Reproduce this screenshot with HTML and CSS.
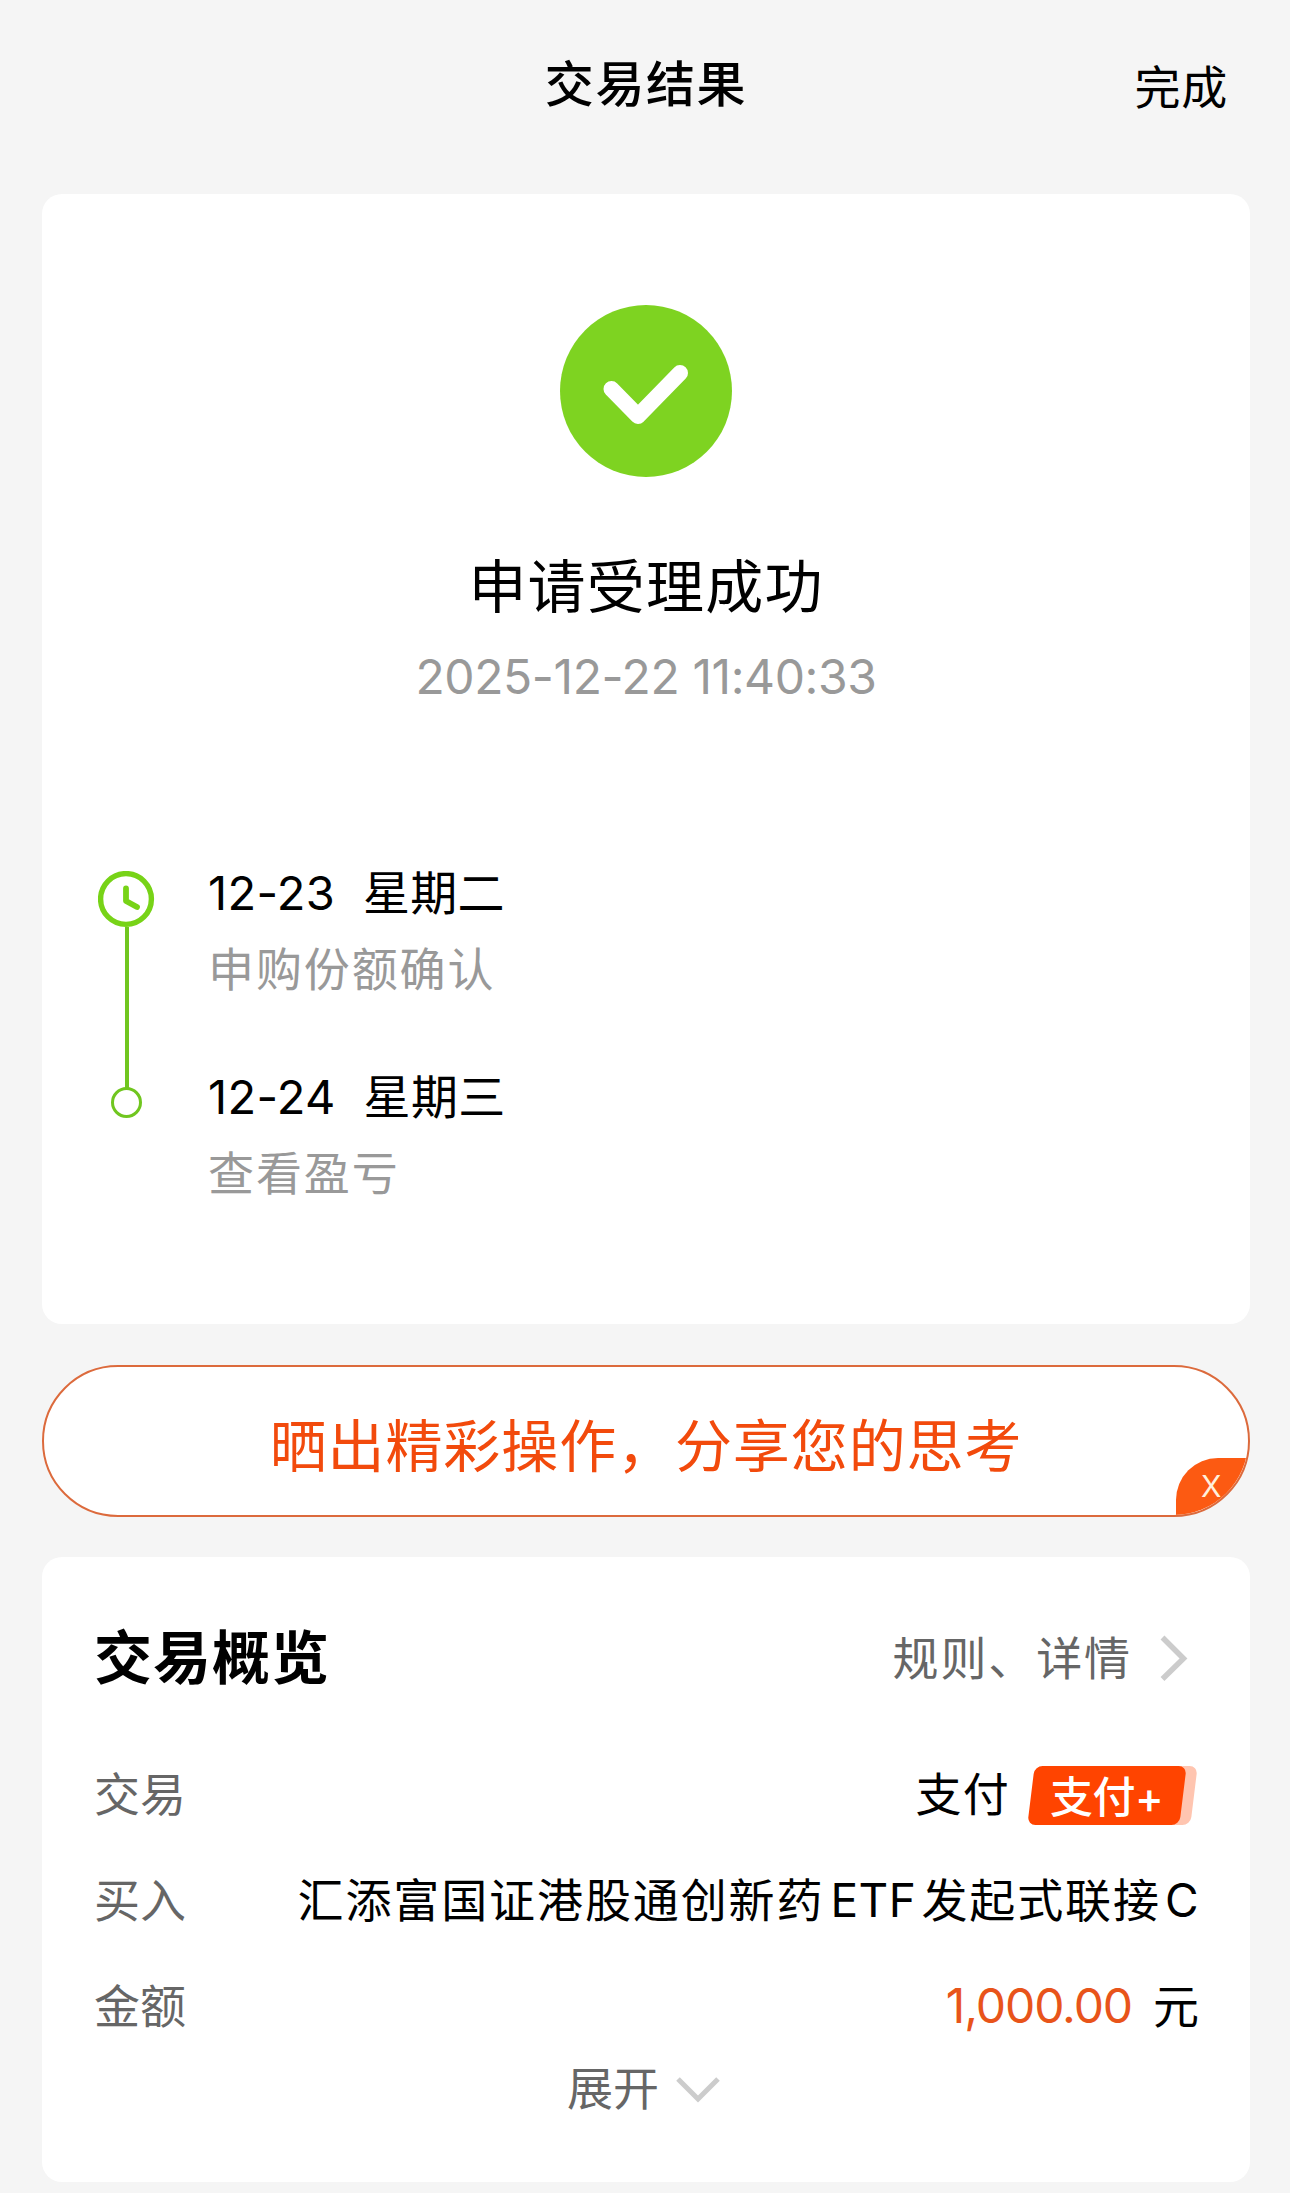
FILE: index.html
```html
<!DOCTYPE html>
<html lang="zh-CN">
<head>
    <meta charset="utf-8">
    <title>交易结果</title>
    <link rel="stylesheet" href="styles.css">
</head>
<body>
    <header class="topbar">
        <h1 class="topbar-title">交易结果</h1>
        <a class="topbar-done">完成</a>
    </header>

    <section class="card result">
        <svg class="result-icon" width="172" height="172" viewBox="0 0 172 172">
            <circle cx="86" cy="86" r="86" fill="#7ed321"/>
            <path d="M51.5 84 L78 111 L120 68" fill="none" stroke="#fff" stroke-width="16" stroke-linecap="round" stroke-linejoin="round"/>
        </svg>
        <h2 class="result-title">申请受理成功</h2>
        <p class="result-time">2025-12-22 11:40:33</p>

        <div class="timeline">
            <svg class="timeline-line" width="57" height="248" viewBox="0 0 57 248">
                <circle cx="28" cy="28" r="25.4" fill="none" stroke="#77d317" stroke-width="5.4"/>
                <path d="M28 17.500 V30 L39 36" fill="none" stroke="#77d317" stroke-width="5.800" stroke-linecap="round" stroke-linejoin="round"/>
                <path d="M29 56 V217" stroke="#70c61f" stroke-width="4"/>
                <circle cx="28.500" cy="231.500" r="14" fill="none" stroke="#70c61f" stroke-width="3"/>
            </svg>
            <div class="timeline-list">
                <div class="step">
                    <p class="step-date"><span>12-23</span><span class="step-day">星期二</span></p>
                    <p class="step-text">申购份额确认</p>
                </div>
                <div class="step">
                    <p class="step-date"><span>12-24</span><span class="step-day">星期三</span></p>
                    <p class="step-text">查看盈亏</p>
                </div>
            </div>
        </div>
    </section>

    <div class="share">
        <span class="share-text">晒出精彩操作，分享您的思考</span>
        <span class="share-close">X</span>
    </div>

    <section class="card overview">
        <div class="overview-head">
            <h2 class="overview-title">交易概览</h2>
            <a class="overview-link">
                <span>规则、详情</span>
                <svg width="28" height="46" viewBox="0 0 28 46">
                    <path d="M2.500 2.500 L23.500 23.500 L2.500 44" fill="none" stroke="#ccc" stroke-width="5.500"/>
                </svg>
            </a>
        </div>
        <div class="row">
            <span class="label">交易</span>
            <span class="value pay">支付<span class="badge">支付+</span></span>
        </div>
        <div class="row">
            <span class="label">买入</span>
            <span class="value fund">汇添富国证港股通创新药<span class="latin">ETF</span>发起式联接<span class="latin last">C</span></span>
        </div>
        <div class="row">
            <span class="label">金额</span>
            <span class="value"><span class="amount">1,000.00</span>元</span>
        </div>
        <div class="expand">
            <span>展开</span>
            <svg class="expand-arrow" width="44" height="26" viewBox="0 0 44 26">
                <path d="M2 2 L22 22 L42 2" fill="none" stroke="#ccc" stroke-width="5"/>
            </svg>
        </div>
    </section>
</body>
</html>
```
FILE: styles.css
```css
:root {
    --bg: #f5f5f5;
    --orange: #ff4400;
    --text: #000;
    --grey: #666;
    --light-grey: #999;
}

* {
    box-sizing: border-box;
    margin: 0;
    padding: 0;
}

body {
    background-color: var(--bg);
    color: var(--text);
    font-family: Inter, "Noto Sans CJK SC", sans-serif;
    font-size: 46px;
    line-height: 60px;
    padding: 0 40px 0 42px;
    height: 2193px;
}

.topbar {
    display: grid;
    grid-template-columns: 1fr auto 1fr;
    align-items: center;
    height: 170px;
    margin-bottom: 24px;
}

.topbar-title {
    grid-column: 2;
    font-size: 49px;
    font-weight: 500;
    letter-spacing: 1.6px;
}

.topbar-done {
    justify-self: end;
    padding: 4px 22px 0 0;
    letter-spacing: 0.8px;
}

.card {
    background-color: #fff;
    border-radius: 20px;
}

.result {
    display: flex;
    flex-direction: column;
    align-items: center;
    height: 1130px;
    padding-top: 111px;
}

.result-title {
    margin-top: 70px;
    font-size: 58px;
    font-weight: 400;
    line-height: 80px;
    letter-spacing: 1.2px;
}

.result-time {
    margin-top: 20px;
    color: var(--light-grey);
    font-size: 48px;
    letter-spacing: -0.4px;
}

.timeline {
    display: flex;
    align-self: stretch;
    gap: 53px;
    margin-top: 156px;
    padding-left: 56px;
}

.timeline-line {
    margin-top: 8px;
}

.timeline-list {
    display: flex;
    flex-direction: column;
    gap: 68px;
}

.step-date {
    display: flex;
    gap: 28px;
    font-size: 47px;
    letter-spacing: 0.3px;
}

.step-text {
    margin-top: 16px;
    color: var(--light-grey);
    letter-spacing: 1.9px;
}

.share {
    position: relative;
    display: flex;
    justify-content: center;
    height: 152px;
    margin: 41px 0 40px;
    padding-top: 50px;
    background-color: #fff;
    border: 2px solid #dc6a3c;
    border-radius: 76px;
    overflow: hidden;
}

.share-text {
    color: #f24a0c;
    font-size: 57px;
    letter-spacing: 0.9px;
}

/* sits in the rounded corner of the share button */
.share-close {
    position: absolute;
    right: 0;
    bottom: 0;
    width: 72px;
    height: 57px;
    padding-left: 25px;
    background-color: #fc5a12;
    border-top-left-radius: 42px;
    color: #fff0dc;
    font-size: 30px;
    font-weight: 400;
    line-height: 56px;
}

.overview {
    height: 625px;
    padding: 70px 51px 0 52px;
}

.overview-head {
    display: flex;
    justify-content: space-between;
    align-items: center;
    height: 62px;
    margin-bottom: 52px;
}

.overview-title {
    font-size: 58px;
    font-weight: 700;
    letter-spacing: 1px;
}

.overview-link {
    display: flex;
    align-items: center;
    gap: 28px;
    padding-right: 11px;
    color: var(--grey);
    letter-spacing: 1.9px;
}

.row {
    display: flex;
    justify-content: space-between;
    align-items: center;
    height: 106px;
}

.label {
    color: var(--grey);
}

.value {
    display: flex;
    align-items: center;
}

.pay {
    letter-spacing: 1.2px;
}

.fund {
    letter-spacing: 1.9px;
}

.latin {
    margin: 0 5px 0 6px;
    letter-spacing: 0.5px;
}

.last {
    margin: 0 0 0 4px;
}

.badge {
    position: relative;
    z-index: 0;
    width: 172px;
    height: 59px;
    margin: 2px 0 0 17px;
    padding-left: 23px;
    color: #fff;
    font-size: 43px;
    font-weight: 500;
    letter-spacing: -0.5px;
    line-height: 62px;
}

.badge::before,
.badge::after {
    content: "";
    position: absolute;
    z-index: -1;
    top: 0;
    bottom: 0;
    border-radius: 8px;
    transform: skewX(-7deg);
}

.badge::before {
    left: 20px;
    right: 5px;
    background-color: #ffc5b0;
    z-index: -2;
}

.badge::after {
    left: 4px;
    right: 16px;
    background-color: var(--orange);
}

.amount {
    margin-right: 21px;
    color: #e8541a;
    font-size: 48px;
    letter-spacing: -1.1px;
}

.expand {
    display: flex;
    justify-content: center;
    align-items: center;
    gap: 17px;
    margin-top: -1px;
    padding-right: 6px;
    color: var(--grey);
}

.expand-arrow {
    margin-top: 4px;
}
```
